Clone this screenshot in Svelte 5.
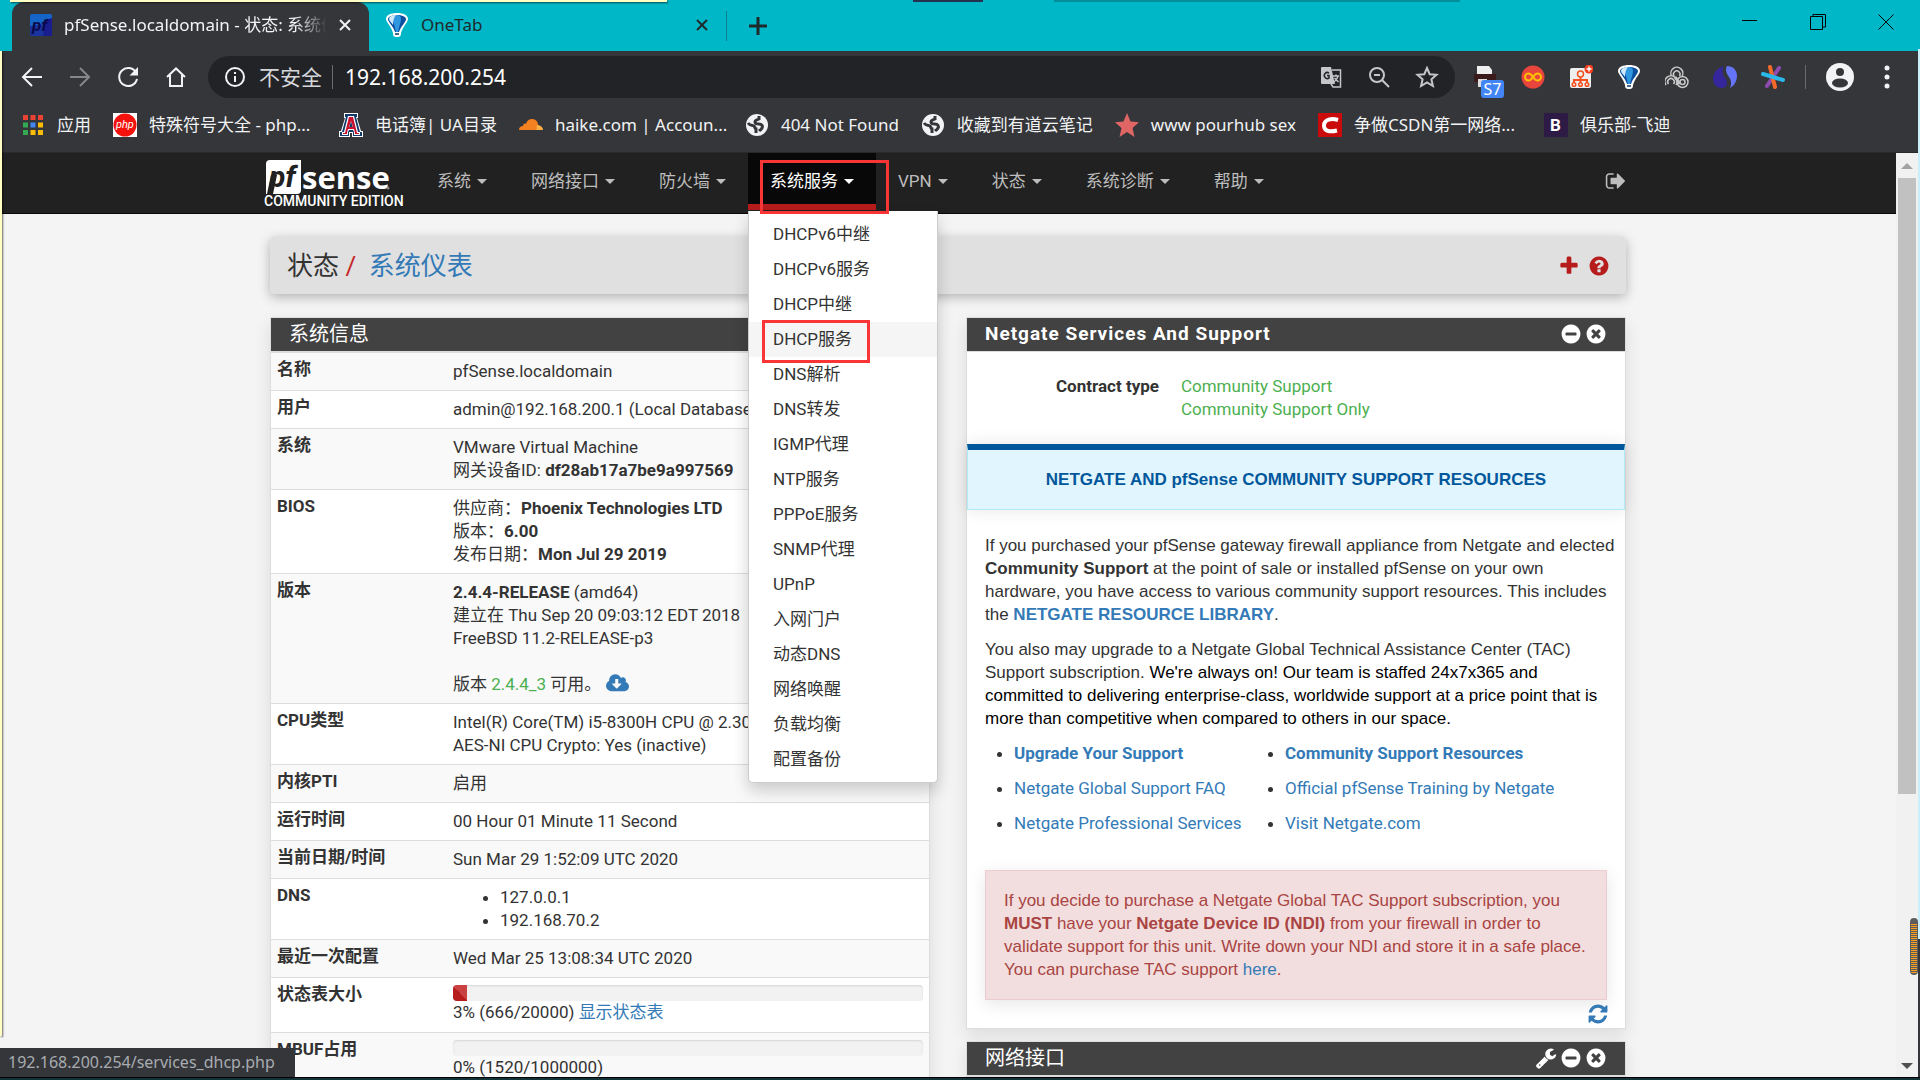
<script>
  const circle = 'm387-226q0 209-103 385.5t-279.5 279.5-385.5 103-385.5-103-279.5-279.5-103-385.5 103-385.5 279.5-279.5 385.5-103 385.5 103 279.5 279.5 103 385.5z';
  const icons = {
    plus: 'M1600 736v192q0 40-28 68t-68 28h-416v416q0 40-28 68t-68 28h-192q-40 0-68-28t-28-68v-416h-416q-40 0-68-28t-28-68v-192q0-40 28-68t68-28h416v-416q0-40 28-68t68-28h192q40 0 68 28t28 68v416h416q40 0 68 28t28 68z',
    minus: 'M1344 960v-128q0-26-19-45t-45-19h-768q-26 0-45 19t-19 45v128q0 26 19 45t45 19h768q26 0 45-19t19-45zm320-64q0 209-103 385.5t-279.5 279.5-385.5 103-385.5-103-279.5-279.5-103-385.5 103-385.5 279.5-279.5 385.5-103 385.5 103 279.5 279.5 103 385.5z',
    times: 'M1277 1122q0-26-19-45l-181-181 181-181q19-19 19-45 0-27-19-46l-90-90q-19-19-46-19-26 0-45 19l-181 181-181-181q-19-19-45-19-27 0-46 19l-90 90q-19 19-19 46 0 26 19 45l181 181-181 181q-19 19-19 45 0 27 19 46l90 90q19 19 46 19 26 0 45-19l181-181 181 181q19 19 45 19 27 0 46-19l90-90q19-19 19-46z' + circle,
    question: 'M1024 1376v-192q0-14-9-23t-23-9h-192q-14 0-23 9t-9 23v192q0 14 9 23t23 9h192q14 0 23-9t9-23zm256-672q0-88-55.5-163t-138.5-116-170-41q-243 0-371 213-15 24 8 42l132 100q7 6 19 6 16 0 25-12 53-68 86-92 34-24 86-24 48 0 85.5 26t37.5 59q0 38-20 61t-68 45q-63 28-115.5 86.5t-52.5 125.5v36q0 14 9 23t23 9h192q14 0 23-9t9-23q0-19 21.5-49.5t54.5-49.5q32-18 49-28.5t46-35 44.5-48 28-60.5 12.5-81zm384 192q0 209-103 385.5t-279.5 279.5-385.5 103-385.5-103-279.5-279.5-103-385.5 103-385.5 279.5-279.5 385.5-103 385.5 103 279.5 279.5 103 385.5z',
    wrench: 'M448 1472q0-26-19-45t-45-19-45 19-19 45 19 45 45 19 45-19 19-45zm644-420l-682 682q-37 37-90 37-52 0-91-37l-106-108q-38-36-38-90 0-53 38-91l681-681q39 98 114.5 173.5t173.5 114.5zm634-435q0 39-23 106-47 134-164.5 217.5t-258.5 83.5q-185 0-316.5-131.5t-131.5-316.5 131.5-316.5 316.5-131.5q58 0 121.5 16.5t107.5 46.5q16 11 16 28t-16 28l-293 169v224l193 107q5-3 79-48.5t135.5-81 70.5-35.5q15 0 23.5 10t8.5 25z',
    refresh: 'M1639 1056q0 5-1 7-64 268-268 434.5t-478 166.5q-146 0-282.5-55t-243.5-157l-129 129q-19 19-45 19t-45-19-19-45v-448q0-26 19-45t45-19h448q26 0 45 19t19 45-19 45l-137 137q71 66 161 102t187 36q134 0 250-65t186-179q11-17 53-117 8-23 30-23h192q13 0 22.5 9.5t9.5 22.5zm25-800v448q0 26-19 45t-45 19h-448q-26 0-45-19t-19-45 19-45l138-138q-148-137-349-137-134 0-250 65t-186 179q-11 17-53 117-8 23-30 23h-199q-13 0-22.5-9.5t-9.5-22.5v-7q65-268 270-434.5t480-166.5q146 0 284 55.5t245 156.5l130-129q19-19 45-19t45 19 19 45z',
    signout: 'M704 1440q0 4 1 20t.5 26.5-3 23.5-10 19.5-20.5 6.5h-320q-119 0-203.500-84.500t-84.500-203.500v-704q0-119 84.500-203.500t203.500-84.500h320q13 0 22.500 9.500t9.500 22.500q0 4 1 20t.5 26.500-3 23.500-10 19.500-20.500 6.500h-320q-66 0-113 47t-47 113v704q0 66 47 113t113 47h312l11.5 1 11.5 3 8 5.500 7 9 2 13.500zm928-544q0 26-19 45l-544 544q-19 19-45 19t-45-19-19-45v-288h-448q-26 0-45-19t-19-45v-384q0-26 19-45t45-19h448v-288q0-26 19-45t45-19 45 19l544 544q19 19 19 45z',
    cloud: 'M1216 928q0-14-9-23t-23-9h-224v-352q0-13-9.5-22.500t-22.500-9.500h-192q-13 0-22.500 9.500t-9.500 22.500v352h-224q-13 0-22.500 9.500t-9.500 22.500q0 14 9 23l352 352q9 9 23 9t23-9l351-351q10-12 10-24zm640 224q0 159-112.500 271.500t-271.500 112.500h-1088q-185 0-316.500-131.500t-131.500-316.500q0-130 70-240t188-165q-2-30-2-43 0-212 150-362t362-150q156 0 285.500 87t188.500 231q71-62 166-62 106 0 181 75t75 181q0 76-41 138 130 31 213.500 135.500t83.500 238.500z'
  };

  const bookmarks = [
    { icon: 'apps', text: '应用' },
    { icon: 'php', text: '特殊符号大全 - php...', clipped: true },
    { icon: 'ua', text: '电话簿| UA目录' },
    { icon: 'cloudflare', text: 'haike.com | Accoun...', clipped: true },
    { icon: 'globe', text: '404 Not Found' },
    { icon: 'globe', text: '收藏到有道云笔记' },
    { icon: 'star', text: 'www pourhub sex' },
    { icon: 'csdn', text: '争做CSDN第一网络...', clipped: true },
    { icon: 'club', text: '俱乐部-飞迪' }
  ];

  const appColors = ['#ea4335', '#ea4335', '#ea4335', '#34a853', '#4285f4', '#fbbc05', '#34a853', '#fbbc05', '#fbbc05'];

  const navItems = ['系统', '网络接口', '防火墙', '系统服务', 'VPN', '状态', '系统诊断', '帮助'];
  const openNav = '系统服务';

  const services = [
    'DHCPv6中继', 'DHCPv6服务', 'DHCP中继', 'DHCP服务', 'DNS解析', 'DNS转发', 'IGMP代理', 'NTP服务',
    'PPPoE服务', 'SNMP代理', 'UPnP', '入网门户', '动态DNS', '网络唤醒', '负载均衡', '配置备份'
  ];
  const hovered = 'DHCP服务';

  const resources = [
    { text: 'Upgrade Your Support', bold: true },
    { text: 'Community Support Resources', bold: true },
    { text: 'Netgate Global Support FAQ' },
    { text: 'Official pfSense Training by Netgate' },
    { text: 'Netgate Professional Services' },
    { text: 'Visit Netgate.com' }
  ];

  const statesUsed = 3;
  let url = '192.168.200.254';
</script>

{#snippet fa(name)}
  <svg class="fa" viewBox="0 0 1792 1792" aria-hidden="true"><path d={icons[name]} /></svg>
{/snippet}

{#snippet balloon()}
  <svg viewBox="0 0 24 24" width="24" height="24" aria-hidden="true">
    <path d="M12 0C6 0 1 2 1 6c0 3 5 7 7 14 0 3 1 4 4 4s4-1 4-4c2-7 7-11 7-14 0-4-5-6-11-6z" fill="#fff" />
    <path d="M12 2c-5 0-9 2-9 4 0 3 5 7 7 13h4c2-6 7-10 7-13 0-2-4-4-9-4z" fill="#0b4f9e" />
    <path d="M12 2c-3 0-4 2-4 4 0 3 2 8 3 13h2c1-5 3-10 3-13 0-2-1-4-4-4z" fill="#2f96e0" />
    <path d="M11 2C7 2 4 4 4 6c0 2 3 4 4 6C8 8 9 4 11 2z" fill="#cfe9fb" />
    <path d="M10 20h4v2h-4z" fill="#4a6a8c" />
  </svg>
{/snippet}

<div class="browser">
  <header class="tab-strip">
    <div class="tab active">
      <svg viewBox="0 0 22 22" width="22" height="22" aria-hidden="true">
        <rect width="22" height="22" rx="2" fill="#1565c8" />
        <path d="M22 4 16 6l-3 16h9z" fill="#1a1a8c" />
        <path d="M0 12 22 9v13H0z" fill="#1b1f8e" opacity=".7" />
        <text x="2" y="17" class="favicon-text">pf</text>
      </svg>
      <span class="tab-title">pfSense.localdomain - 状态: 系统仪表</span>
      <button class="tab-close" aria-label="关闭"><svg viewBox="0 0 12 12" width="12" height="12"><path d="M1 1l10 10M11 1 1 11" /></svg></button>
    </div>
    <div class="tab">
      {@render balloon()}
      <span class="tab-title">OneTab</span>
      <button class="tab-close" aria-label="关闭"><svg viewBox="0 0 12 12" width="12" height="12"><path d="M1 1l10 10M11 1 1 11" /></svg></button>
    </div>
    <button class="new-tab" aria-label="新标签页"><svg viewBox="0 0 18 18" width="18" height="18"><path d="M9 0v18M0 9h18" /></svg></button>
    <div class="window-buttons">
      <button aria-label="最小化"><svg viewBox="0 0 16 16" width="16" height="16"><path d="M0 6.500h15" /></svg></button>
      <button aria-label="还原"><svg viewBox="0 0 16 16" width="16" height="16"><path d="M.5 2.500h12v13H.5zM3 2.500v-2h12.500v12.500H13" /></svg></button>
      <button aria-label="关闭窗口"><svg viewBox="0 0 16 16" width="16" height="16"><path d="M.5.5l15 15M15.500.5l-15 15" /></svg></button>
    </div>
  </header>

  <div class="toolbar">
    <button aria-label="后退"><svg viewBox="0 0 24 24"><path d="M22 12H3M12 3l-9 9 9 9" /></svg></button>
    <button class="dim" aria-label="前进"><svg viewBox="0 0 24 24"><path d="M2 12h19M12 3l9 9-9 9" /></svg></button>
    <button aria-label="重新加载"><svg viewBox="0 0 24 24"><path d="M20 7.500A9 9 0 1 0 21 14" /><path d="M22 2v8.500h-8.500z" class="solid" /></svg></button>
    <button aria-label="主页"><svg viewBox="0 0 24 24"><path d="M3 12 12 3.500l9 8.500M6 10v11h12V10" /></svg></button>
    <div class="omnibox">
      <svg viewBox="0 0 24 24"><circle cx="12" cy="12" r="9" /><path d="M12 11v6M12 7v2" /></svg>
      <span class="insecure">不安全</span>
      <input aria-label="地址" bind:value={url} />
      <button aria-label="翻译">
        <svg viewBox="0 0 24 24">
          <path d="M3 2h9l4 17H3a1 1 0 0 1-1-1V3a1 1 0 0 1 1-1z" class="solid" />
          <path d="M13 5h8.500v17H14l-2-3M14 11h6M17 9.500V11M19 11c-.5 3-2 4.500-4 6M15.500 13l4 4" stroke-width="1.500" />
          <path d="M10 8a3 3 0 1 0 0 5v-2.500H8" stroke="#222327" stroke-width="1.500" />
        </svg>
      </button>
      <button aria-label="缩放"><svg viewBox="0 0 24 24"><circle cx="10" cy="10" r="7" /><path d="M7 10h6M15 15l7 7" /></svg></button>
      <button aria-label="收藏"><svg viewBox="0 0 24 24"><path d="M12 3l2.700 6.200 6.800.6-5.100 4.500 1.500 6.700-5.900-3.500L6.100 21l1.500-6.700-5.100-4.500 6.800-.6z" /></svg></button>
    </div>
    <div class="extensions">
      <span class="ext">
        <svg viewBox="0 0 24 24"><path d="M4 1h12l3 4v5H4z" fill="#eee" stroke="none" /><path d="M1 9h22v8H1z" fill="#3a1a1a" stroke="none" /><path d="M5 14h9v8H5z" fill="#ddd" stroke="none" /></svg>
        <b class="badge">S7</b>
      </span>
      <svg viewBox="0 0 24 24"><circle cx="12" cy="12" r="11.500" fill="#e8453c" stroke="none" /><path d="M12 12c-2-3-3.500-3.500-4.500-3.500a3.500 3.500 0 0 0 0 7c1 0 2.500-.5 4.500-3.500s3.500-3.500 4.500-3.500a3.500 3.500 0 0 1 0 7c-1 0-2.500-.5-4.500-3.500z" stroke="#fcc107" /></svg>
      <svg viewBox="0 0 24 24"><rect x="1" y="3" width="21" height="20" rx="2" fill="#eee" stroke="none" /><path d="M11.500 12v5M5 18v-3h13v3M11.500 15v3" stroke="#f4511e" /><g fill="#eee" stroke="#f4511e" stroke-width="1.500"><circle cx="11.500" cy="9" r="3" /><circle cx="5" cy="19.500" r="1.800" /><circle cx="11.500" cy="19.500" r="1.800" /><circle cx="18" cy="19.500" r="1.800" /></g><circle cx="20" cy="4" r="4.500" fill="#f4401e" stroke="none" /><path d="M20 1.500v5M17.500 4h5" stroke="#fff" stroke-width="1.500" /></svg>
      <span class="flat">{@render balloon()}</span>
      <svg viewBox="0 0 24 24"><g stroke="#c8c8c8" stroke-width="1.500"><path d="M6.500 11a6 6 0 1 1 10 1" /><path d="M9 11a3.300 3.300 0 1 1 5.500 0" /><path d="M1 20a6 6 0 1 1 10 0" /><path d="M3.500 19a3.300 3.300 0 1 1 5 0" /><circle cx="17.500" cy="17" r="5.500" /><circle cx="17.500" cy="17" r="2.500" /><path d="M10 12l5 7" stroke-width="3" /></g></svg>
      <svg viewBox="0 0 24 24"><path d="M11 1C4 3 0 8 0 14c0 5 4 9 8 9 6 0 8-5 4-10-3-4-3-8-1-12z" fill="#35279b" stroke="none" /><path d="M14 1c6 0 10 4 10 10 0 5-3 10-7 12 2-5 1-8-1-11-3-4-4-8-2-11z" fill="#6573f5" stroke="none" /></svg>
      <svg viewBox="0 0 24 24" stroke-linecap="round"><path d="M18 3 6 21" stroke="#8e4bb0" stroke-width="4" /><path d="M9 2l5 20" stroke="#f26a2a" stroke-width="4" /><path d="M2 9l20 6" stroke="#29b6e8" stroke-width="4" /></svg>
    </div>
    <button class="avatar" aria-label="用户"><svg viewBox="0 0 28 28"><circle cx="14" cy="14" r="14" fill="#f1f3f4" stroke="none" /><circle cx="14" cy="9" r="4" fill="#35363a" stroke="none" /><ellipse cx="14" cy="20" rx="8" ry="4.500" fill="#35363a" stroke="none" /></svg></button>
    <button aria-label="菜单"><svg viewBox="0 0 24 24"><g class="solid"><circle cx="12" cy="3" r="2.500" /><circle cx="12" cy="12" r="2.500" /><circle cx="12" cy="21" r="2.500" /></g></svg></button>
  </div>

  <nav class="bookmarks">
    {#each bookmarks as mark}
      <a href="#top" class="bookmark">
        <svg viewBox="0 0 24 24" width="24" height="24" aria-hidden="true">
          {#if mark.icon === 'apps'}
            {#each appColors as color, i}
              <rect x={(i % 3) * 7.5} y={2 + Math.floor(i / 3) * 7.5} width="5" height="5" fill={color} />
            {/each}
          {:else if mark.icon === 'php'}
            <rect width="24" height="24" fill="#fff" /><circle cx="12" cy="12" r="11.500" fill="#f5120d" />
            <text x="3" y="15" class="php-text">php</text>
          {:else if mark.icon === 'ua'}
            <path d="M5 0h14v5h-1l4 13h2v6H13v-4h-2v4H0v-6h2L6 5H5z" fill="#fff" />
            <path d="M6 1h12v3h-1l4 15h2v4h-9v-4h-4v4H1v-4h2L7 4H6z" fill="#123a6b" />
            <path d="M9 3h6l4 16h2v3h-6v-3l-1-2h-4l-1 2v3H3v-3h2zM12 8l-2 7h4z" fill="#fff" fill-rule="evenodd" />
            <path d="M10 4h4l4 16h2v1h-4v-1l-1-4H9l-1 4v1H4v-1h2zM12 8l-2 6h4z" fill="#c8102e" fill-rule="evenodd" />
          {:else if mark.icon === 'cloudflare'}
            <path d="M0 17c0-3 2-4 4-4 0-2 2-3 3-2 1-4 4-5 6-5 4 0 6 3 6 6l-2 5z" fill="#f4811f" />
            <path d="M17 17l1-5c3 0 6 2 6 5z" fill="#fbad41" />
          {:else if mark.icon === 'globe'}
            <circle cx="12" cy="12" r="11" fill="#f1f3f4" />
            <path d="M14 3v3c-2 1-4 1-4 3s2 2 4 2c3 0 4 2 3 4s-2 2-3 3M3 10c2 3 5 2 6 3s1 3 2 3v4" fill="none" stroke="#35363a" stroke-width="3" />
          {:else if mark.icon === 'star'}
            <path d="M12 0l3.500 8.500 8.500.8-6.500 5.700 2 9L12 19l-7.500 5 2-9L0 9.300l8.500-.8z" fill="#e06666" />
          {:else if mark.icon === 'csdn'}
            <rect width="24" height="24" fill="#c90b0b" />
            <path d="M20 7c-6-2-14-1-14 5.500C6 19 13 19 19 17.500" fill="none" stroke="#fff" stroke-width="4" />
          {:else}
            <rect width="24" height="24" fill="#2e1b45" />
            <text x="6" y="18" class="club-text">B</text>
          {/if}
        </svg>
        <span class:clipped={mark.clipped}>{mark.text}</span>
      </a>
    {/each}
  </nav>

  <div class="viewport">
    <div class="page">
      <div class="navbar">
        <div class="container navbar-inner">
          <svg class="logo" viewBox="0 0 144 50" width="144" height="50" role="img" aria-label="pfSense Community Edition">
            <path d="M6 1h31v30q0 4-4 4H2V5q0-4 4-4z" fill="#fff" />
            <path d="M3 35 7 16h6L9 35z" fill="#212121" />
            <text x="5" y="28" class="logo-pf">pf</text>
            <text x="38" y="30" class="logo-sense">sense</text>
            <circle cx="124" cy="29" r="1.500" fill="#888" />
            <text x="0" y="47" class="logo-edition">COMMUNITY EDITION</text>
          </svg>
          <ul class="nav-items">
            {#each navItems as item}
              <li class:open={item === openNav}>
                <a href="#top">{item}<span class="caret"></span></a>
                {#if item === openNav}
                  <ul class="dropdown">
                    {#each services as service}
                      <li><a href="#top" class:hovered={service === hovered}>{service}</a></li>
                    {/each}
                  </ul>
                  <span class="mark mark-nav"></span>
                  <span class="mark mark-item"></span>
                {/if}
              </li>
            {/each}
          </ul>
          <a href="#top" class="logout" aria-label="退出">{@render fa('signout')}</a>
        </div>
      </div>

      <main class="container">
        <div class="page-header">
          <h1>状态 <span class="slash">/</span> <a href="#top">系统仪表</a></h1>
          <div class="header-actions">{@render fa('plus')}{@render fa('question')}</div>
        </div>

        <div class="columns">
          <section class="panel">
            <h2 class="panel-heading">系统信息</h2>
            <table>
              <tbody>
                <tr><th>名称</th><td>pfSense.localdomain</td></tr>
                <tr><th>用户</th><td>admin@192.168.200.1 (Local Database)</td></tr>
                <tr><th>系统</th><td>VMware Virtual Machine<br />网关设备ID: <b>df28ab17a7be9a997569</b></td></tr>
                <tr><th>BIOS</th><td>供应商：<b>Phoenix Technologies LTD</b><br />版本：<b>6.00</b><br />发布日期：<b>Mon Jul 29 2019</b></td></tr>
                <tr>
                  <th>版本</th>
                  <td>
                    <b>2.4.4-RELEASE</b> (amd64)<br />建立在 Thu Sep 20 09:03:12 EDT 2018<br />FreeBSD 11.2-RELEASE-p3<br /><br />
                    版本 <span class="green">2.4.4_3</span> 可用。
                    <a href="#top" aria-label="升级"><svg class="cloud" viewBox="-64 128 1920 1536"><path d={icons.cloud} /></svg></a>
                  </td>
                </tr>
                <tr><th>CPU类型</th><td>Intel(R) Core(TM) i5-8300H CPU @ 2.30GHz<br />AES-NI CPU Crypto: Yes (inactive)</td></tr>
                <tr><th>内核PTI</th><td>启用</td></tr>
                <tr><th>运行时间</th><td>00 Hour 01 Minute 11 Second</td></tr>
                <tr><th>当前日期/时间</th><td>Sun Mar 29 1:52:09 UTC 2020</td></tr>
                <tr><th>DNS</th><td><ul class="dns"><li>127.0.0.1</li><li>192.168.70.2</li></ul></td></tr>
                <tr><th>最近一次配置</th><td>Wed Mar 25 13:08:34 UTC 2020</td></tr>
                <tr>
                  <th>状态表大小</th>
                  <td class="meter">
                    <div class="progress"><div class="progress-bar" style="width: {statesUsed}%"></div></div>
                    {statesUsed}% (666/20000) <a href="#top">显示状态表</a>
                  </td>
                </tr>
                <tr>
                  <th>MBUF占用</th>
                  <td class="meter"><div class="progress"></div>0% (1520/1000000)</td>
                </tr>
              </tbody>
            </table>
          </section>

          <div class="column">
            <section class="panel">
              <h2 class="panel-heading spaced">
                Netgate Services And Support
                <span class="heading-icons">{@render fa('minus')}{@render fa('times')}</span>
              </h2>
              <dl class="contract">
                <dt>Contract type</dt>
                <dd>Community Support<br />Community Support Only</dd>
              </dl>
              <div class="banner">NETGATE AND pfSense COMMUNITY SUPPORT RESOURCES</div>
              <div class="support">
                <p>
                  If you purchased your pfSense gateway firewall appliance from Netgate and elected<br />
                  <b>Community Support</b> at the point of sale or installed pfSense on your own<br />
                  hardware, you have access to various community support resources. This includes<br />
                  the <a href="#top"><b>NETGATE RESOURCE LIBRARY</b></a>.
                </p>
                <p>
                  You also may upgrade to a Netgate Global Technical Assistance Center (TAC)<br />
                  Support subscription. <span class="black">We're always on! Our team is staffed 24x7x365 and<br />
                  committed to delivering enterprise-class, worldwide support at a price point that is<br />
                  more than competitive when compared to others in our space.</span>
                </p>
                <ul class="resources">
                  {#each resources as link}
                    <li><a href="#top" class:bold={link.bold}>{link.text}</a></li>
                  {/each}
                </ul>
                <div class="alert">
                  If you decide to purchase a Netgate Global TAC Support subscription, you<br />
                  <b>MUST</b> have your <b>Netgate Device ID (NDI)</b> from your firewall in order to<br />
                  validate support for this unit. Write down your NDI and store it in a safe place.<br />
                  You can purchase TAC support <a href="#top">here</a>.
                </div>
                <button class="refresh" aria-label="刷新">{@render fa('refresh')}</button>
              </div>
            </section>

            <section class="panel">
              <h2 class="panel-heading">
                网络接口
                <span class="heading-icons">{@render fa('wrench')}{@render fa('minus')}{@render fa('times')}</span>
              </h2>
            </section>
          </div>
        </div>
      </main>
    </div>

    <div class="scrollbar">
      <span class="arrow up"></span>
      <span class="thumb"></span>
      <span class="arrow down"></span>
    </div>
  </div>

  <div class="taskbar-edge"></div>
  <div class="status-bubble">192.168.200.254/services_dhcp.php</div>
  <div class="note note-top"></div>
  <div class="note note-left"></div>
  <div class="desk-edge"></div>
  <div class="desk-shadow"></div>
  <div class="desk-right"></div>
  <div class="float-handle"></div>
</div>

<style>
  :global(body) {
    background: #35363a;
  }

  .browser {
    position: relative;
    display: flex;
    flex-direction: column;
    height: 100vh;
    overflow: hidden;
    background: #35363a;
    color: #f1f3f4;
    font: 17px/24px 'Noto Sans', 'Noto Sans CJK SC', sans-serif;
  }

  a {
    text-decoration: none;
  }

  button {
    display: flex;
    padding: 0;
    border: 0;
    background: none;
    color: inherit;
    cursor: pointer;
  }

  ul {
    list-style: none;
    margin: 0;
    padding: 0;
  }

  /* Tabs */
  .tab-strip {
    display: flex;
    flex: none;
    height: 51px;
    background: #00b7c7;
    color: #1f2a2c;
    padding-left: 12px;
  }

  .tab {
    display: flex;
    align-items: center;
    gap: 12px;
    box-sizing: border-box;
    width: 357px;
    padding: 0 18px 2px 16px;
  }

  .tab.active {
    background: #35363a;
    color: #f1f3f4;
    border-radius: 12px 12px 0 0;
    margin-top: 2px;
    padding: 0 18px 4px;
  }

  .tab-title {
    flex: 1;
    white-space: nowrap;
    overflow: hidden;
  }

  .tab.active .tab-title {
    mask-image: linear-gradient(to right, #000 88%, transparent);
  }

  .tab-close svg,
  .new-tab svg {
    fill: none;
    stroke: currentColor;
    stroke-width: 2;
  }

  .new-tab {
    align-items: center;
    align-self: center;
    height: 30px;
    padding: 0 22px;
    border-left: 1px solid #0c7f8b;
  }

  .new-tab svg {
    stroke-width: 3;
  }

  .window-buttons {
    display: flex;
    gap: 52px;
    margin-left: auto;
    padding: 14px 26px 0 0;
    align-items: flex-start;
  }

  .window-buttons svg {
    fill: none;
    stroke: #000;
  }

  /* Toolbar */
  .toolbar {
    display: flex;
    flex: none;
    align-items: center;
    height: 52px;
    gap: 24px;
    padding: 0 21px 0 20px;
  }

  .toolbar svg {
    width: 24px;
    height: 24px;
    fill: none;
    stroke: currentColor;
    stroke-width: 2;
    flex: none;
  }

  .toolbar .flat {
    display: flex;
  }

  .toolbar .flat :global(svg) {
    stroke: none;
  }

  .toolbar .solid {
    fill: currentColor;
    stroke: none;
  }

  .dim {
    color: #85868a;
  }

  .omnibox {
    display: flex;
    flex: 1;
    align-items: center;
    gap: 12px;
    box-sizing: border-box;
    height: 42px;
    margin-left: -4px;
    padding: 0 16px 0 15px;
    border-radius: 21px;
    background: #222327;
  }

  .omnibox button {
    color: #c4c6c9;
    margin-left: 12px;
  }

  .insecure {
    font-size: 21px;
    color: #d5d7da;
    padding-right: 10px;
    border-right: 1px solid #6a6b6f;
  }

  .omnibox input {
    flex: 1;
    min-width: 0;
    border: 0;
    padding: 0;
    background: none;
    color: #fff;
    font: 21px/28px 'Noto Sans', sans-serif;
    outline: none;
  }

  .extensions {
    display: flex;
    gap: 24px;
    margin-left: -6px;
    padding-right: 20px;
    border-right: 1px solid #6a6b6f;
  }

  .ext {
    position: relative;
    display: flex;
  }

  .badge {
    position: absolute;
    left: 8px;
    top: 15px;
    width: 23px;
    border-radius: 3px;
    background: #4285f4;
    color: #fff;
    font-size: 16px;
    font-weight: 400;
    line-height: 18px;
    text-align: center;
  }

  .toolbar .avatar svg {
    width: 28px;
    height: 28px;
  }

  .avatar {
    margin: 0 -3px 0 -4px;
  }

  /* Bookmarks */
  .bookmarks {
    display: flex;
    flex: none;
    align-items: center;
    gap: 22px;
    box-sizing: border-box;
    height: 50px;
    padding: 0 23px 6px;
    border-bottom: 1px solid #28292c;
  }

  .bookmark {
    display: flex;
    align-items: center;
    gap: 12px;
    color: #f1f3f4;
    white-space: nowrap;
  }

  .bookmark:first-child {
    gap: 10px;
  }

  .clipped {
    width: 168px;
  }

  .favicon-text {
    font: italic 700 17px Roboto, sans-serif;
    fill: #0a0a4a;
  }

  .php-text {
    font: italic 11px Roboto, sans-serif;
    fill: #fff;
  }

  .club-text {
    font: 700 17px Roboto, sans-serif;
    fill: #fff;
  }

  /* Page */
  .viewport {
    display: flex;
    flex: 1;
    min-height: 0;
  }

  .page {
    flex: 1;
    overflow: hidden;
    background: #f4f4f4;
    color: #333;
    font: 17px/23px Roboto, 'Noto Sans CJK SC', sans-serif;
  }

  .page a {
    color: #337ab7;
  }

  .fa {
    width: 22px;
    height: 22px;
    fill: currentColor;
  }

  .container {
    max-width: 1356px;
    margin: 0 auto;
  }

  .navbar {
    height: 60px;
    background: #212121;
    border-bottom: 1px solid #080808;
  }

  .navbar-inner {
    display: flex;
    align-items: flex-start;
  }

  .logo {
    flex: none;
    margin: 6px 7px 0 -6px;
  }

  .logo-pf {
    font: italic 700 30px Roboto, sans-serif;
    fill: #212121;
  }

  .logo-sense {
    font: 700 31px 'Open Sans', sans-serif;
    fill: #fff;
  }

  .logo-edition {
    font: 500 14px Roboto, sans-serif;
    fill: #fff;
  }

  .nav-items {
    display: flex;
  }

  .nav-items > li {
    position: relative;
  }

  .nav-items > li > a {
    display: flex;
    align-items: center;
    gap: 6px;
    height: 57px;
    box-sizing: border-box;
    padding: 0 22px;
  }

  .page .nav-items > li > a {
    color: #bdbdbd;
  }

  .page .nav-items > .open > a {
    background: #080808;
    border-bottom: 6px solid #b71c1c;
    padding-top: 6px;
    color: #fff;
  }

  .caret {
    border: 5px solid transparent;
    border-top-color: currentColor;
    border-bottom: 0;
  }

  .dropdown {
    position: absolute;
    z-index: 2;
    top: 58px;
    left: 0;
    width: 188px;
    padding: 6px 0 5px;
    border: 1px solid #ccc;
    border-top: 0;
    border-radius: 0 0 5px 5px;
    background: #fff;
    box-shadow: 0 8px 16px rgba(0, 0, 0, 0.18);
  }

  .dropdown a {
    display: block;
    padding: 6px 24px;
  }

  .page .dropdown a {
    color: #333;
  }

  .dropdown .hovered {
    background: #f5f5f5;
  }

  .mark {
    position: absolute;
    z-index: 3;
    box-sizing: border-box;
    border: 3px solid #fa3535;
  }

  .mark-nav {
    left: 12px;
    top: 7px;
    width: 129px;
    height: 54px;
  }

  .mark-item {
    left: 14px;
    top: 167px;
    width: 108px;
    height: 43px;
  }

  .page .logout {
    display: flex;
    margin: 17px -1px 0 auto;
    color: #bdbdbd;
  }

  .page-header {
    display: flex;
    align-items: center;
    justify-content: space-between;
    height: 57px;
    margin: 23px 0;
    padding: 0 16px 0 17px;
    border-radius: 4px;
    background: #e0e0e0;
    box-shadow: 0 3px 12px rgba(0, 0, 0, 0.28);
  }

  h1 {
    margin: 0;
    font-size: 26px;
    font-weight: 400;
    line-height: 32px;
  }

  .slash {
    color: #c62828;
    padding-right: 6px;
  }

  .header-actions {
    display: flex;
    gap: 8px;
    color: #b71c1c;
  }

  .columns {
    display: grid;
    grid-template-columns: minmax(0, 1fr) minmax(0, 1fr);
    align-items: start;
    gap: 36px;
  }

  .panel {
    margin-bottom: 12px;
    border: 1px solid #ddd;
    background: #fff;
    box-shadow: 0 6px 16px rgba(0, 0, 0, 0.1);
  }

  .panel-heading {
    display: flex;
    align-items: center;
    justify-content: space-between;
    box-sizing: border-box;
    height: 34px;
    margin: 0;
    padding: 0 18px 2px;
    border-bottom: 1px solid #ddd;
    background: #424242;
    color: #fff;
    font-size: 20px;
    font-weight: 400;
    line-height: 30px;
  }

  .spaced {
    font-size: 19px;
    font-weight: 700;
    letter-spacing: 1px;
  }

  .heading-icons {
    display: flex;
    gap: 3px;
  }

  table {
    width: 100%;
    table-layout: fixed;
    border-collapse: collapse;
    border-top: 1px solid #ddd;
  }

  tr {
    border-bottom: 1px solid #ddd;
  }

  tr:nth-child(odd) {
    background: #f9f9f9;
  }

  th {
    width: 164px;
    padding: 5px 6px;
    text-align: left;
    vertical-align: top;
    font-weight: 700;
  }

  td {
    padding: 7px 6px;
    white-space: nowrap;
    vertical-align: top;
  }

  .meter {
    padding-bottom: 8px;
  }

  .green,
  dd {
    color: #4caf50;
  }

  .cloud {
    width: 23px;
    height: 19px;
    fill: #337ab7;
    vertical-align: -3px;
  }

  .dns {
    list-style: disc;
    padding-left: 47px;
  }

  .progress {
    height: 16px;
    border-radius: 4px;
    overflow: hidden;
    background: #f2f2f2;
    box-shadow: inset 0 1px 2px rgba(0, 0, 0, 0.12);
  }

  .progress-bar {
    height: 100%;
    background: linear-gradient(45deg, #b71c1c 50%, #c94141 50%);
  }

  .contract {
    display: flex;
    gap: 22px;
    margin: 0;
    padding: 23px 89px;
  }

  dt {
    font-weight: 700;
  }

  dd {
    margin: 0;
  }

  .banner {
    padding: 18px 0;
    border: 1px solid #b2ebf2;
    border-top: 6px solid #01579b;
    background: #e1f5fe;
    box-shadow: 0 0 16px rgba(0, 0, 0, 0.1);
    color: #01579b;
    font-family: 'Liberation Sans', sans-serif;
    font-weight: 700;
    text-align: center;
  }

  .support {
    display: flex;
    flex-direction: column;
    padding: 24px 18px 3px;
  }

  .support p,
  .alert {
    margin: 0 0 12px;
    font-family: 'Liberation Sans', sans-serif;
    white-space: nowrap;
  }

  .black {
    color: #000;
  }

  .resources {
    display: grid;
    grid-template-columns: 271px 1fr;
    row-gap: 12px;
    list-style: disc;
    padding-left: 29px;
  }

  .bold {
    font-weight: 700;
  }

  .support .alert {
    margin: 35px 0 3px;
    padding: 18px;
    border: 1px solid #ebccd1;
    background: #f2dede;
    box-shadow: 0 4px 16px rgba(0, 0, 0, 0.1);
    color: #a94442;
  }

  .refresh {
    align-self: flex-end;
    margin-right: -2px;
    color: #337ab7;
  }

  /* Scrollbar */
  .scrollbar {
    display: flex;
    flex-direction: column;
    align-items: center;
    width: 22px;
    padding: 10px 0 8px;
    margin-right: 2px;
    box-sizing: border-box;
    background: #f1f1f1;
  }

  .arrow {
    border: 6px solid transparent;
  }

  .up {
    border-top: 0;
    border-bottom-color: #a3a3a3;
  }

  .down {
    margin-top: auto;
    border-bottom: 0;
    border-top-color: #505050;
  }

  .thumb {
    width: 18px;
    height: 68%;
    margin-top: 9px;
    background: #c1c1c1;
  }

  .taskbar-edge {
    flex: none;
    height: 2px;
    border-top: 1px solid #000;
    background: #123338;
  }

  .status-bubble {
    position: absolute;
    left: 0;
    bottom: 3px;
    z-index: 5;
    padding: 2px 20px 3px 8px;
    background: #35363a;
    color: #a8acb1;
    font-size: 16px;
  }

  /* Edges of other desktop windows around the browser */
  .note {
    position: absolute;
    background: #ffffc4;
    box-shadow: 1px 1px 2px rgba(0, 0, 0, 0.6);
  }

  .note-top {
    left: 10px;
    top: 0;
    width: 657px;
    height: 2px;
  }

  .note-left {
    left: 0;
    top: 51px;
    bottom: 44px;
    width: 2px;
  }

  .desk-edge {
    position: absolute;
    left: 913px;
    top: 0;
    width: 70px;
    height: 2px;
    background: #26324d;
  }

  .desk-shadow {
    position: absolute;
    left: 1054px;
    top: 0;
    width: 406px;
    height: 2px;
    background: #008f9b;
  }

  .desk-right {
    position: absolute;
    right: 0;
    top: 49px;
    width: 2px;
    height: 890px;
    background: #c9effa;
  }

  .float-handle {
    position: absolute;
    right: 2px;
    top: 918px;
    box-sizing: border-box;
    width: 8px;
    height: 57px;
    border: 1px solid #5c5c5c;
    border-top-width: 6px;
    border-radius: 4px;
    background: repeating-linear-gradient(#ffa01e 0 1px, #5c5c5c 1px 2px);
  }
</style>
